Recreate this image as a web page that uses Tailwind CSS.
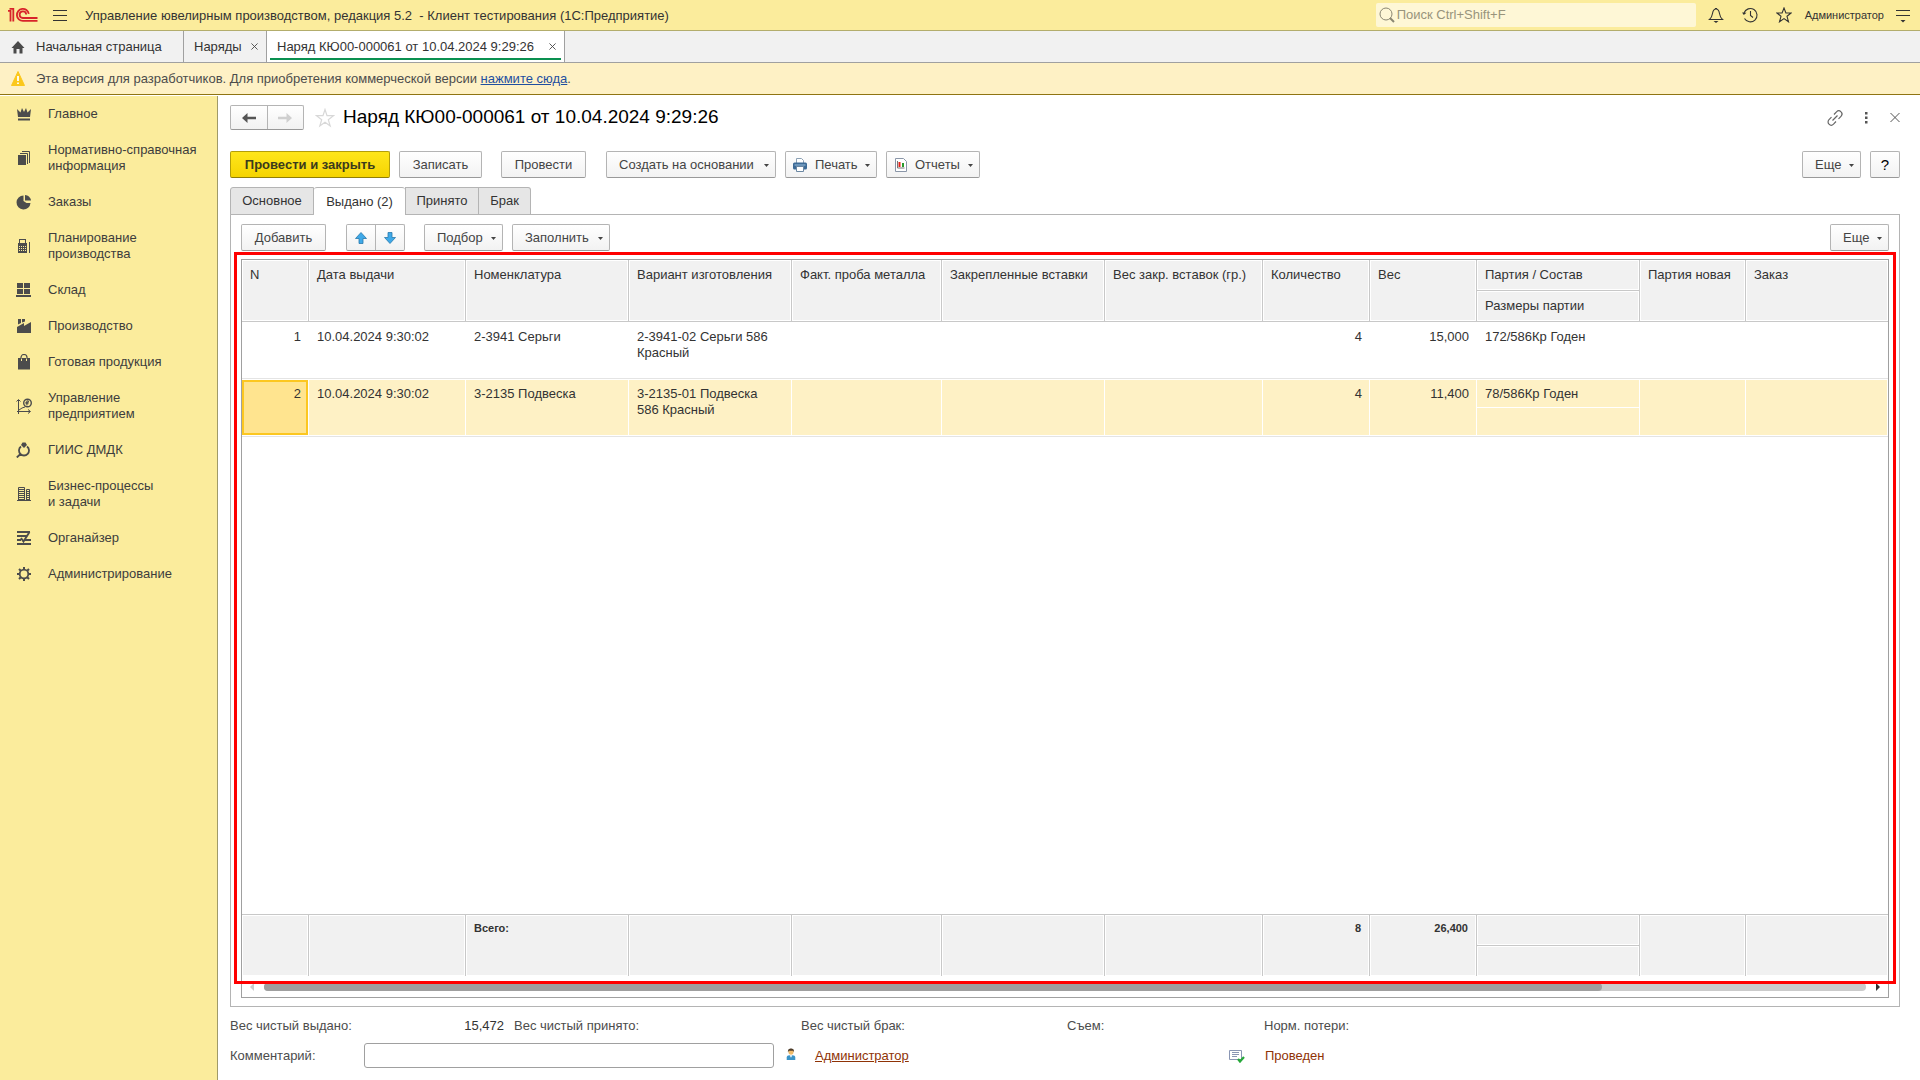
<!DOCTYPE html>
<html lang="ru">
<head>
<meta charset="utf-8">
<title>Наряд КЮ00-000061 от 10.04.2024 9:29:26</title>
<script src="https://cdn.jsdelivr.net/npm/@tailwindcss/browser@4"></script>
</head>
<body class="flex h-screen flex-col bg-white font-['Liberation_Sans',Arial,sans-serif] text-[13px] leading-4 text-[#333]">

<!-- Title bar -->
<header class="flex h-[31px] shrink-0 items-center border-b border-[#b3ad6c] bg-[#fbec9c]">
  <svg class="ml-2 h-4 w-[30px]" viewBox="0 0 30 16" fill="none" stroke="#d8232a" stroke-width="1.800"><path d="M0 3.900H2.500V14.500M1.500 1.900H5.300V14.500"/><path d="M20.800 6.800A6 6 0 1 0 15 13.900H29.500M18.200 7.500A3.300 3.300 0 1 0 15 11H29.500"/></svg>
  <button class="ml-[15px] h-4 w-3.5" aria-label="Меню"><svg class="h-4 w-3.5" viewBox="0 0 14 16" stroke="#333" stroke-width="1"><path d="M0 3.500h14M0 8.500h14M0 13.500h14"/></svg></button>
  <div class="ml-[18px] flex-1 pt-px whitespace-pre">Управление ювелирным производством, редакция 5.2  - Клиент тестирования (1С:Предприятие)</div>
  <label class="mr-3 flex h-6 w-80 items-center rounded-[2px] bg-[#fef7d6] pl-[3px]">
    <svg class="h-4 w-4 shrink-0" viewBox="0 0 16 16" fill="none" stroke="#8a8672"><circle cx="7" cy="7" r="6"/><path d="M11 11l4 4" stroke-width="2"/></svg>
    <input class="ml-0.5 w-full bg-transparent outline-none placeholder:text-[#98947c]" type="text" placeholder="Поиск Ctrl+Shift+F" aria-label="Поиск">
  </label>
  <div class="flex items-center gap-[18px]">
    <button aria-label="Уведомления"><svg class="h-4 w-4" viewBox="0 0 16 16" fill="none" stroke="#333" stroke-width="1.100"><path d="M1.500 12.500c2-1.500 2.500-3 3-6C5 3.500 6 2 8 2s3 1.500 3.500 4.500c.5 3 1 4.500 3 6z"/><path d="M7 1.500h2"/><path d="M5.500 14h5L8 16z" fill="#333" stroke="none"/></svg></button>
    <button aria-label="История"><svg class="h-4 w-4" viewBox="0 0 16 16" fill="none" stroke="#333" stroke-width="1.100"><path d="M2 6A6.700 6.700 0 1 1 2.500 11.500"/><path d="M8.500 4v4.500l2.500 2"/><path d="M0 5.500l4.500.3L1.800 8z" fill="#333" stroke="none"/></svg></button>
    <button aria-label="Избранное"><svg class="h-4 w-4" viewBox="0 0 16 16" fill="none" stroke="#333" stroke-width="1.100"><path d="M8 1l1.900 5H15l-4 3.300 1.500 5.500L8 11.600l-4.500 3.200L5 9.300 1 6h5.100z"/></svg></button>
  </div>
  <a href="#" class="ml-[13px] text-[11px]">Администратор</a>
  <button class="mr-2.5 ml-3 h-4 w-3.5" aria-label="Настройки"><svg class="h-4 w-3.5" viewBox="0 0 14 16" stroke="#333"><path d="M0 3.500h14M0 8.500h14"/><path d="M4.500 13h5L7 15.500z" fill="#333" stroke="none"/></svg></button>
</header>

<!-- Open windows -->
<nav class="flex h-8 shrink-0 border-b border-[#a0a0a0] bg-[#f1f1f1]">
  <a href="#" class="flex w-[184px] items-center border-r border-[#a0a0a0] pl-2.5"><svg class="h-3.5 w-4" viewBox="0 0 16 14" fill="#4a4a4a"><path d="M8 1L1.500 8H3.500v5.500h3V9h3v4.500h3V8h2z"/></svg><span class="ml-2.5">Начальная страница</span></a>
  <a href="#" class="flex w-[83px] items-center justify-between border-r border-[#a0a0a0] pr-2 pl-2.5">Наряды<svg class="h-[7px] w-[7px]" viewBox="0 0 8 8" stroke="#444"><path d="M.5.5l7 7M7.500.5l-7 7"/></svg></a>
  <a href="#" class="relative flex w-[298px] items-center justify-between border-r border-[#a0a0a0] bg-white pr-2 pl-2.5">Наряд КЮ00-000061 от 10.04.2024 9:29:26<svg class="h-[7px] w-[7px]" viewBox="0 0 8 8" stroke="#444"><path d="M.5.5l7 7M7.500.5l-7 7"/></svg><span class="absolute inset-x-[3px] bottom-0.5 h-0.5 bg-[#0a9050]"></span></a>
</nav>

<!-- Notice -->
<div class="flex h-8 shrink-0 items-center border-b border-[#8f7412] bg-[#fef1c5] pl-2.5 text-[#4c4c4c]">
  <svg class="h-[15px] w-4" viewBox="0 0 16 15"><path d="M8 0.500L14.500 14.500H1.500z" fill="#fbc81c" stroke="#fbc81c" stroke-linejoin="round"/><path d="M8 5v5M8 11.500v1.500" stroke="#fff" stroke-width="1.800"/></svg>
  <p class="ml-2.5">Эта версия для разработчиков. Для приобретения коммерческой версии <a href="#" class="text-[#1f4fa0] underline">нажмите сюда</a>.</p>
</div>

<div class="flex min-h-0 flex-1 pt-px">
  <!-- Sections -->
  <aside class="w-[218px] shrink-0 border-r border-[#a09a68] bg-[#fbec9c]">
    <ul class="text-[#3d3d3d]">
      <li><a href="#" class="flex items-center gap-4 py-2.5 pl-4"><svg class="h-4 w-4" viewBox="0 0 16 16" fill="#4c4c4c"><path d="M1 3l3.500 3.500L6 2l2 4 2-4 1.500 4.500L15 3l-1 8H2zM2 12.500h12v2H2z"/></svg>Главное</a></li>
      <li><a href="#" class="flex items-center gap-4 py-2.5 pl-4"><svg class="h-4 w-4" viewBox="0 0 16 16" fill="#4c4c4c"><path d="M2 5h8v10H2z"/><path d="M4 3.500h7.500V14M6 1.500h7.500V13" fill="none" stroke="#4c4c4c"/></svg>Нормативно-справочная<br>информация</a></li>
      <li><a href="#" class="flex items-center gap-4 py-2.5 pl-4"><svg class="h-4 w-4" viewBox="0 0 16 16" fill="#4c4c4c"><path d="M7.500 1.500a7 7 0 1 0 7 7.500h-4L7.500 7zM9 1v5.500h6C15 4 12 1 9 1z"/></svg>Заказы</a></li>
      <li><a href="#" class="flex items-center gap-4 py-2.5 pl-4"><svg class="h-4 w-4" viewBox="0 0 16 16"><path d="M2 5h1V1h7v4h1v10H2z" fill="#4c4c4c"/><path d="M4 2h5v3H4z" fill="#fbec9c"/><path d="M3 8.500h7M3 10.500h7M3 12.500h7" stroke="#fbec9c" stroke-dasharray="1 1"/><path d="M13.500 4v11" stroke="#4c4c4c"/></svg>Планирование<br>производства</a></li>
      <li><a href="#" class="flex items-center gap-4 py-2.5 pl-4"><svg class="h-4 w-4" viewBox="0 0 16 16" fill="#4c4c4c"><path d="M1 1h6v5H1zM8 1h6v5H8zM1 7h6v5H1zM8 7h6v5H8zM0 13h15v2H0z"/></svg>Склад</a></li>
      <li><a href="#" class="flex items-center gap-4 py-2.5 pl-4"><svg class="h-4 w-4" viewBox="0 0 16 16" fill="#4c4c4c"><path d="M2 1h3v4L2 6.500zM6 1h3v2.500L6 4.500zM1 9l7-4v3l7-4v11H1z"/></svg>Производство</a></li>
      <li><a href="#" class="flex items-center gap-4 py-2.5 pl-4"><svg class="h-4 w-4" viewBox="0 0 16 16" fill="#4c4c4c"><path d="M2 4h12v11.500H2z"/><path d="M5.500 7V4M10.500 7V4" stroke="#fbec9c" stroke-width="1"/><path d="M5 5V3.500a3 3 0 0 1 6 0V5" fill="none" stroke="#4c4c4c" stroke-width="1.200"/><path d="M6.500 4a1.500 1.500 0 0 1 3 0z" fill="#fbec9c"/></svg>Готовая продукция</a></li>
      <li><a href="#" class="flex items-center gap-4 py-2.5 pl-4"><svg class="h-4 w-4" viewBox="0 0 16 16" fill="none" stroke="#4c4c4c"><path d="M2.500 2v14M1 13.500h13M.5 3.500l2-2 2 2M12 11.500l2.500 2-2.500 2M3 12l3-2 3-1"/><circle cx="11.500" cy="5" r="3.800" stroke-width="1.400"/><path d="M9.500 5.700h3M10.900 7.500V2.900h1.500v1.500h-3"/></svg>Управление<br>предприятием</a></li>
      <li><a href="#" class="flex items-center gap-4 py-2.5 pl-4"><svg class="h-4 w-4" viewBox="0 0 16 16" fill="none" stroke="#4c4c4c" stroke-width="1.800"><path d="M5 4.500a5 5 0 1 0 6 0M4.500 12L.8 15.500"/><path d="M5 3L6.500.5h3L11 3 8 6z" fill="#4c4c4c" stroke="none"/></svg>ГИИС ДМДК</a></li>
      <li><a href="#" class="flex items-center gap-4 py-2.5 pl-4"><svg class="h-4 w-4" viewBox="0 0 16 16" fill="none" stroke="#4c4c4c"><path d="M2.500 15V1.500h6V15M10.500 15V3.500H13.500V15M1 14.500h14"/><path d="M3 3.500h5M3 5.500h5M3 7.500h5M3 9.500h5M3 11.500h5M3 13.500h5M10 5.500h4M10 7.500h4M10 9.500h4M10 11.500h4M10 13.500h4"/></svg>Бизнес-процессы<br>и задачи</a></li>
      <li><a href="#" class="flex items-center gap-4 py-2.5 pl-4"><svg class="h-4 w-4" viewBox="0 0 16 16" fill="none" stroke="#4c4c4c" stroke-width="1.900"><path d="M1 2h13M1 6h10M1 10h4M8 10h7M1 14h14M5 8l2.500 3.500L13.500 2"/></svg>Органайзер</a></li>
      <li><a href="#" class="flex items-center gap-4 py-2.5 pl-4"><svg class="h-4 w-4" viewBox="0 0 16 16" fill="none" stroke="#4c4c4c"><circle cx="8" cy="8" r="4.300" stroke-width="1.800"/><path d="M8 1v2.500M8 12.500V15M1 8h2.500M12.500 8H15M3 3l1.800 1.800M11.200 11.200L13 13M13 3l-1.800 1.800M4.800 11.200L3 13" stroke-width="2"/></svg>Администрирование</a></li>
    </ul>
  </aside>

  <main class="flex min-w-0 flex-1 flex-col pr-5 pl-3">
    <!-- Form title -->
    <div class="mt-[9px] flex h-[25px] shrink-0 items-center">
      <div class="flex h-[25px] w-[74px] rounded-[2px] border border-[#b4b4b4] border-b-[#999] bg-linear-to-b from-white to-[#f2f2f2]">
        <button class="flex flex-1 items-center justify-center border-r border-[#b4b4b4]" aria-label="Назад"><svg class="h-3 w-3.5" viewBox="0 0 14 12" fill="#555"><path d="M0 6l5.500-5v3.800H14v2.400H5.500V11z"/></svg></button>
        <button class="flex flex-1 items-center justify-center" aria-label="Вперед"><svg class="h-3 w-3.5" viewBox="0 0 14 12" fill="#cfcfcf"><path d="M14 6L8.500 1v3.800H0v2.400h8.500V11z"/></svg></button>
      </div>
      <button class="ml-[11px]" aria-label="В избранное"><svg class="h-5 w-5" viewBox="0 0 20 20" fill="none" stroke="#d8d8d8" stroke-width="1.200"><path d="M10 1.500l2 6.200h6.500l-5.200 4 1.900 6.300L10 14.200l-5.200 3.800 1.900-6.300L1.500 7.700h6.500z"/></svg></button>
      <h1 class="ml-2 flex-1 pb-0.5 text-[19px] leading-6 text-black">Наряд КЮ00-000061 от 10.04.2024 9:29:26</h1>
      <div class="flex items-center">
        <button aria-label="Ссылка"><svg class="h-4 w-4" viewBox="0 0 16 16" fill="none" stroke="#666" stroke-width="1.200"><path d="M7 4.500l2.500-2.700a3 3 0 0 1 4.500 4.500L11.500 8.800M9 11.500l-2.500 2.700A3 3 0 0 1 2 9.700L4.500 7.200M5.500 10.500l5-5"/></svg></button>
        <button class="ml-[21px]" aria-label="Действия"><svg class="h-4 w-1" viewBox="0 0 4 16" fill="#555"><path d="M1 2h2.500v2.500H1zM1 6.500h2.500V9H1zM1 11h2.500v2.500H1z"/></svg></button>
        <button class="ml-[22px]" aria-label="Закрыть"><svg class="h-4 w-2.5" viewBox="0 0 10 16" stroke="#555"><path d="M.5 3l9 9M9.500 3l-9 9"/></svg></button>
      </div>
    </div>

    <!-- Commands -->
    <div class="mt-[21px] flex h-[27px] shrink-0 text-[#444]">
      <button class="w-40 rounded-[2px] border border-[#b39e0a] border-b-[#8f7e08] bg-linear-to-b from-[#ffe61a] to-[#f5d400] font-bold text-[#3b3b1c]">Провести и закрыть</button>
      <button class="ml-[9px] w-[83px] rounded-[2px] border border-[#b4b4b4] border-b-[#999] bg-linear-to-b from-white to-[#f2f2f2]">Записать</button>
      <button class="ml-[19px] w-[85px] rounded-[2px] border border-[#b4b4b4] border-b-[#999] bg-linear-to-b from-white to-[#f2f2f2]">Провести</button>
      <button class="ml-5 flex w-[170px] items-center justify-between rounded-[2px] border border-[#b4b4b4] border-b-[#999] bg-linear-to-b from-white to-[#f2f2f2] pr-1.5 pl-3">Создать на основании<svg class="mt-0.5 h-[3px] w-[5px]" viewBox="0 0 5 3" fill="#444"><path d="M0 0h5L2.500 3z"/></svg></button>
      <button class="ml-[9px] flex w-[92px] items-center rounded-[2px] border border-[#b4b4b4] border-b-[#999] bg-linear-to-b from-white to-[#f2f2f2] pr-1.5 pl-[7px]"><svg class="h-3.5 w-3.5" viewBox="0 0 14 14"><path d="M3.500 5V.5h5l2 2V5" fill="#fff" stroke="#8ba0b4"/><rect y="4.500" width="14" height="7" rx="1.500" fill="#3c6a96"/><path d="M1.500 7h11" stroke="#9cc0de"/><path d="M3.500 8.500h7v5h-7z" fill="#fff" stroke="#6b87a2"/></svg><span class="ml-2 flex-1 text-left">Печать</span><svg class="mt-0.5 h-[3px] w-[5px]" viewBox="0 0 5 3" fill="#444"><path d="M0 0h5L2.500 3z"/></svg></button>
      <button class="ml-[9px] flex w-[94px] items-center rounded-[2px] border border-[#b4b4b4] border-b-[#999] bg-linear-to-b from-white to-[#f2f2f2] pr-1.5 pl-2"><svg class="h-3.5 w-3" viewBox="0 0 12 14"><path d="M.5.5h8l3 3v10H.5z" fill="#fff" stroke="#8a96a8"/><path d="M2.500 3v7h7" fill="none" stroke="#777"/><path d="M3.500 4h2V9h-2z" fill="#e3231b"/><path d="M7 5h2V9H7z" fill="#2a9a2a"/></svg><span class="ml-2 flex-1 text-left">Отчеты</span><svg class="mt-0.5 h-[3px] w-[5px]" viewBox="0 0 5 3" fill="#444"><path d="M0 0h5L2.500 3z"/></svg></button>
      <button class="ml-auto flex w-[59px] items-center justify-between rounded-[2px] border border-[#b4b4b4] border-b-[#999] bg-linear-to-b from-white to-[#f2f2f2] pr-1.5 pl-3">Еще<svg class="mt-0.5 h-[3px] w-[5px]" viewBox="0 0 5 3" fill="#444"><path d="M0 0h5L2.500 3z"/></svg></button>
      <button class="ml-[9px] w-[30px] rounded-[2px] border border-[#b4b4b4] border-b-[#999] bg-linear-to-b from-white to-[#f2f2f2] text-[15px] text-black" aria-label="Справка">?</button>
    </div>

    <!-- Tabs -->
    <div class="z-10 mt-[9px] -mb-px flex h-7 shrink-0" role="tablist">
      <button role="tab" class="w-[84px] rounded-tl-[3px] border border-[#b4b4b4] bg-[#e6e6e6]">Основное</button>
      <button role="tab" aria-selected="true" class="w-[91px] rounded-t-[3px] border-t border-[#b4b4b4] bg-white">Выдано (2)</button>
      <button role="tab" class="w-[74px] border border-[#b4b4b4] bg-[#e6e6e6]">Принято</button>
      <button role="tab" class="w-[52px] rounded-tr-[3px] border border-l-0 border-[#b4b4b4] bg-[#e6e6e6]">Брак</button>
    </div>

    <section class="flex min-h-0 flex-1 flex-col border border-[#b4b4b4] px-2.5 pt-[9px] pb-2">
      <div class="flex h-[27px] shrink-0 text-[#444]">
        <button class="w-[85px] rounded-[2px] border border-[#b4b4b4] border-b-[#999] bg-linear-to-b from-white to-[#f2f2f2]">Добавить</button>
        <div class="ml-5 flex w-[59px] rounded-[2px] border border-[#b4b4b4] border-b-[#999] bg-linear-to-b from-white to-[#f2f2f2]">
          <button class="flex flex-1 items-center justify-center border-r border-[#b4b4b4]" aria-label="Вверх"><svg class="h-3 w-3" viewBox="0 0 12 12" fill="#3fa9e8" stroke="#2878ac" stroke-width=".8"><path d="M6 .5L11.500 6.500H8v5H4v-5H.5z"/></svg></button>
          <button class="flex flex-1 items-center justify-center" aria-label="Вниз"><svg class="h-3 w-3" viewBox="0 0 12 12" fill="#3fa9e8" stroke="#2878ac" stroke-width=".8"><path d="M6 11.500L.5 5.500H4v-5h4v5h3.500z"/></svg></button>
        </div>
        <button class="ml-[19px] flex w-[79px] items-center justify-between rounded-[2px] border border-[#b4b4b4] border-b-[#999] bg-linear-to-b from-white to-[#f2f2f2] pr-1.5 pl-3">Подбор<svg class="mt-0.5 h-[3px] w-[5px]" viewBox="0 0 5 3" fill="#444"><path d="M0 0h5L2.500 3z"/></svg></button>
        <button class="ml-[9px] flex w-[98px] items-center justify-between rounded-[2px] border border-[#b4b4b4] border-b-[#999] bg-linear-to-b from-white to-[#f2f2f2] pr-1.5 pl-3">Заполнить<svg class="mt-0.5 h-[3px] w-[5px]" viewBox="0 0 5 3" fill="#444"><path d="M0 0h5L2.500 3z"/></svg></button>
        <button class="ml-auto flex w-[59px] items-center justify-between rounded-[2px] border border-[#b4b4b4] border-b-[#999] bg-linear-to-b from-white to-[#f2f2f2] pr-1.5 pl-3">Еще<svg class="mt-0.5 h-[3px] w-[5px]" viewBox="0 0 5 3" fill="#444"><path d="M0 0h5L2.500 3z"/></svg></button>
      </div>

      <div class="relative mt-2 flex min-h-0 flex-1 flex-col border border-[#a0a0a0]">
        <div class="min-h-0 flex-1">
          <table class="h-full w-full table-fixed border-separate border-spacing-0 text-left [&_td]:align-top [&_th]:align-top">
            <colgroup><col class="w-[67px]"><col class="w-[157px]"><col class="w-[163px]"><col class="w-[163px]"><col class="w-[150px]"><col class="w-[163px]"><col class="w-[158px]"><col class="w-[107px]"><col class="w-[107px]"><col class="w-[163px]"><col class="w-[106px]"><col></colgroup>
            <thead class="[&_th]:border-b [&_th]:border-[#c8c8c8] [&_th]:bg-[#f1f1f1] [&_th]:px-2 [&_th]:pt-[7px] [&_th]:font-normal [&_th]:whitespace-nowrap [&_th]:shadow-[inset_0_0_0_1px_#fff]">
              <tr class="h-[31px]"><th rowspan="2" class="border-r">N</th><th rowspan="2" class="border-r">Дата выдачи</th><th rowspan="2" class="border-r">Номенклатура</th><th rowspan="2" class="border-r">Вариант изготовления</th><th rowspan="2" class="border-r">Факт. проба металла</th><th rowspan="2" class="border-r">Закрепленные вставки</th><th rowspan="2" class="border-r">Вес закр. вставок (гр.)</th><th rowspan="2" class="border-r">Количество</th><th rowspan="2" class="border-r">Вес</th><th class="border-r">Партия / Состав</th><th rowspan="2" class="border-r">Партия новая</th><th rowspan="2">Заказ</th></tr>
              <tr class="h-[31px]"><th class="border-r">Размеры партии</th></tr>
            </thead>
            <tbody>
              <tr class="h-[57px] [&>td]:border-b [&>td]:border-[#e4e4e4] [&>td]:px-2 [&>td]:pt-[7px]"><td class="text-right">1</td><td>10.04.2024 9:30:02</td><td>2-3941 Серьги</td><td>2-3941-02 Серьги 586<br>Красный</td><td></td><td></td><td></td><td class="text-right">4</td><td class="text-right">15,000</td><td>172/586Кр Годен</td><td></td><td></td></tr>
              <tr class="h-[58px] [&>td]:border-b [&>td]:border-[#e4e4e4] [&>td]:bg-[#fef1c5] [&>td]:px-2 [&>td]:pt-[7px] [&>td]:shadow-[inset_-1px_0_0_#fff,inset_0_1px_0_#fff,inset_0_-1px_0_#fff]"><td class="relative text-right"><div class="absolute inset-y-px right-px left-0 border-2 border-[#fcc720] bg-[#ffe48f] pt-1 pr-[5px]">2</div></td><td>10.04.2024 9:30:02</td><td>3-2135 Подвеска</td><td>3-2135-01 Подвеска<br>586 Красный</td><td></td><td></td><td></td><td class="text-right">4</td><td class="text-right">11,400</td><td><div class="-mx-2 border-b border-white px-2 pb-[5px]">78/586Кр Годен</div></td><td></td><td></td></tr>
              <tr><td colspan="12"></td></tr>
            </tbody>
            <tfoot class="text-[11px] font-bold [&_td]:border-[#c8c8c8] [&_td]:bg-[#f1f1f1] [&_td]:px-2 [&_td]:pt-[5px] [&_td]:shadow-[inset_0_0_0_1px_#fff]">
              <tr class="h-8"><td rowspan="2" class="border-t border-r"></td><td rowspan="2" class="border-t border-r"></td><td rowspan="2" class="border-t border-r">Всего:</td><td rowspan="2" class="border-t border-r"></td><td rowspan="2" class="border-t border-r"></td><td rowspan="2" class="border-t border-r"></td><td rowspan="2" class="border-t border-r"></td><td rowspan="2" class="border-t border-r text-right">8</td><td rowspan="2" class="border-t border-r text-right">26,400</td><td class="border-y border-r"></td><td rowspan="2" class="border-t border-r"></td><td rowspan="2" class="border-t"></td></tr>
              <tr class="h-[30px]"><td class="border-r"></td></tr>
            </tfoot>
          </table>
        </div>
        <div class="flex h-[21px] shrink-0 items-center px-2">
          <svg class="h-2 w-1" viewBox="0 0 4 8" fill="#ccc"><path d="M4 0v8L0 4z"/></svg>
          <div class="mx-2.5 h-2 flex-1 rounded-full bg-[#cbcbcb]"><div class="h-2 rounded-full bg-[#9f9f9f]" style="width:83.5%"></div></div>
          <svg class="h-2 w-1" viewBox="0 0 4 8" fill="#333"><path d="M0 0v8l4-4z"/></svg>
        </div>
        <div class="pointer-events-none absolute -inset-x-2 -top-2 bottom-[13px] border-3 border-[#f00]"></div>
      </div>
    </section>

    <!-- Totals and comment -->
    <footer class="shrink-0 pt-[11px] pb-3 text-[#4c4c4c]">
      <div class="flex h-4">
        <span class="w-[134px]">Вес чистый выдано:</span><span class="w-[140px] text-right text-[#333]">15,472</span>
        <span class="ml-2.5 w-[287px]">Вес чистый принято:</span><span class="w-[266px]">Вес чистый брак:</span><span class="w-[197px]">Съем:</span><span>Норм. потери:</span>
      </div>
      <div class="mt-[9px] flex h-[25px] items-center">
        <label for="comment" class="w-[134px]">Комментарий:</label>
        <input id="comment" type="text" class="h-[25px] w-[410px] rounded-[3px] border border-[#a0a0a0] bg-white px-2">
        <svg class="mb-1 ml-3 h-3 w-2.5" viewBox="0 0 10 14"><path d="M0 14V11c0-1.500 1.500-2.500 3-2.500h4c1.500 0 3 1 3 2.500v3z" fill="#3b94c8"/><path d="M3.500 8.500h3L5 11.500z" fill="#fff"/><circle cx="5" cy="4.800" r="3" fill="#f0bb6b"/><path d="M1.500 5C1 1.500 3 .5 5 .5S9 1.500 8.500 5L7.500 3.200h-5z" fill="#4d3b28"/></svg>
        <a href="#" class="ml-[19px] w-[414px] text-[#8f3306]"><span class="underline">Администратор</span></a>
        <svg class="h-3.5 w-4" viewBox="0 0 16 14"><path d="M.5 1.500h12v9H.5z" fill="#fff" stroke="#8a96b4"/><path d="M3 3.500h7M3 5.500h7M3 7.500h5" stroke="#8a96b4"/><path d="M9 10l2 2.500L15 8" fill="none" stroke="#27a83a" stroke-width="2.200"/></svg>
        <span class="ml-5 text-[#8f3306]">Проведен</span>
      </div>
    </footer>
  </main>
</div>
</body>
</html>
